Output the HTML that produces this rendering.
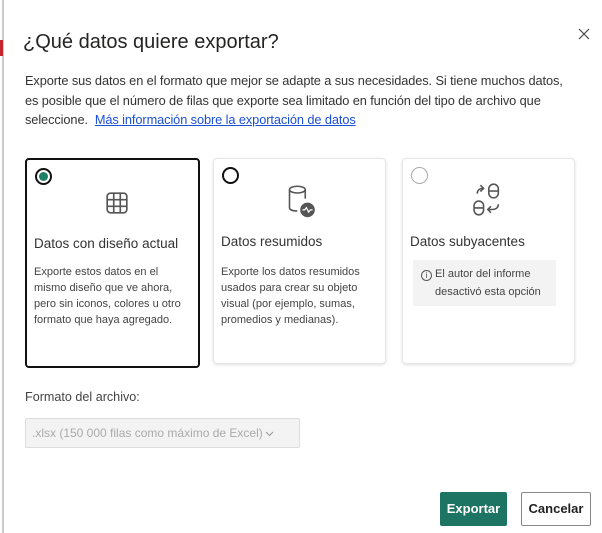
<!DOCTYPE html>
<html><head><meta charset="utf-8"><style>
*{box-sizing:border-box;margin:0;padding:0}
body{width:602px;height:533px;background:#fff;font-family:"Liberation Sans",sans-serif;color:#252423;position:relative;overflow:hidden}
.abs{position:absolute}
.card{position:absolute;top:158px;height:206px;border:1px solid #e6e6e6;border-radius:4px;box-shadow:0 1px 3px rgba(0,0,0,.12);background:#fff}
.card h3{position:absolute;font-size:13.5px;font-weight:normal;color:#333}
.card p{position:absolute;font-size:11px;line-height:16px;color:#444}
.radio{position:absolute;left:7px;top:7px;width:17px;height:17px;border-radius:50%;border:2px solid #111}
</style></head><body>
<div class="abs" style="left:2px;top:0;width:2px;height:533px;background:#ccc"></div>
<div class="abs" style="left:0;top:40px;width:3px;height:16px;background:#c4262e"></div>
<div class="abs" style="left:23px;top:31px;font-size:20px;color:#252423">¿Qué datos quiere exportar?</div>
<svg class="abs" style="left:578px;top:28px" width="12" height="12" viewBox="0 0 12 12"><path d="M1 1L11 11M11 1L1 11" stroke="#444" stroke-width="1.2"/></svg>
<div class="abs" style="left:25px;top:71px;white-space:nowrap;font-size:12.8px;line-height:19.5px;color:#333;letter-spacing:-0.1px">Exporte sus datos en el formato que mejor se adapte a sus necesidades. Si tiene muchos datos,<br>es posible que el número de filas que exporte sea limitado en función del tipo de archivo que<br>seleccione.&nbsp; <span style="color:#1a4fd6;text-decoration:underline">Más información sobre la exportación de datos</span></div>

<div class="card" style="left:25px;width:175px;height:210px;border:2px solid #111;box-shadow:none">
 <div class="radio" style="left:8px;top:8px"><div style="position:absolute;left:2px;top:2px;width:9px;height:9px;border-radius:50%;background:#1e7f67"></div></div>
 <svg style="position:absolute;left:78px;top:31px" width="24" height="24" viewBox="0 0 22 22" fill="none" stroke="#555" stroke-width="1.5"><rect x="2" y="2" width="18" height="18" rx="3"/><path d="M8 2v18M14 2v18M2 8h18M2 14h18"/></svg>
 <h3 style="left:7px;top:76px">Datos con diseño actual</h3>
 <p style="left:7px;top:104px;width:150px">Exporte estos datos en el mismo diseño que ve ahora, pero sin iconos, colores u otro formato que haya agregado.</p>
</div>

<div class="card" style="left:213px;width:173px">
 <div class="radio" style="left:8px;top:8px"></div>
 <svg style="position:absolute;left:72px;top:25px" width="34" height="36" viewBox="0 0 30 32" fill="none" stroke="#555" stroke-width="1.4"><ellipse cx="10" cy="5" rx="7" ry="3"/><path d="M3 5v16c0 2 3 3 7 3M17 5v8"/><circle cx="19" cy="23" r="6.5" fill="#555" stroke="none"/><path d="M14.5 23h2l1.5-2 2 4 1.5-2h2" stroke="#fff" stroke-width="1.1"/></svg>
 <h3 style="left:7px;top:75px">Datos resumidos</h3>
 <p style="left:7px;top:105px;width:162px">Exporte los datos resumidos usados para crear su objeto visual (por ejemplo, sumas, promedios y medianas).</p>
</div>

<div class="card" style="left:402px;width:173px">
 <div class="radio" style="left:8px;top:8px;border:1.5px solid #aaa"></div>
 <svg style="position:absolute;left:70px;top:24px" width="38" height="34" viewBox="0 0 36 32" fill="none" stroke="#555" stroke-width="1.5"><path d="M4 10c0-3 2-5 6-5M7 2l3 3-3 3"/><rect x="15" y="1" width="9" height="13" rx="4.5"/><path d="M15 7.5h9"/><rect x="1" y="17" width="9" height="13" rx="4.5"/><path d="M1 23.5h9M24 20c0 3-2 5-6 5h-3M17 22l-3 3 3 3"/></svg>
 <h3 style="left:7px;top:75px">Datos subyacentes</h3>
 <div style="position:absolute;left:10px;top:101px;width:143px;height:46px;background:#f3f3f3;font-size:11px;line-height:18px;color:#444;padding:5px 0 0 8px">
  <span style="display:inline-block;width:11px;height:11px;border:1px solid #555;border-radius:50%;font-size:8px;line-height:9px;text-align:center;vertical-align:-1px">i</span> El autor del informe<br><span style="padding-left:14px">desactivó esta opción</span></div>
</div>

<div class="abs" style="left:25px;top:390px;font-size:12.6px;color:#444">Formato del archivo:</div>
<div class="abs" style="left:25px;top:418px;width:275px;height:30px;border:1px solid #ddd;background:#f3f3f3;border-radius:2px;font-size:12px;color:#aaa;padding:7px 0 0 6px">.xlsx (150 000 filas como máximo de Excel)<svg width="9" height="6" viewBox="0 0 9 6" style="margin-left:2px"><path d="M1 1l3.5 3.5L8 1" stroke="#999" fill="none"/></svg></div>

<div class="abs" style="left:440px;top:492px;width:67px;height:34px;background:#1e7463;color:#fff;font-size:13px;font-weight:bold;text-align:center;line-height:34px;border-radius:2px">Exportar</div>
<div class="abs" style="left:521px;top:492px;width:70px;height:34px;border:1px solid #888;color:#222;font-size:13px;font-weight:bold;text-align:center;line-height:32px;border-radius:2px">Cancelar</div>
</body></html>
